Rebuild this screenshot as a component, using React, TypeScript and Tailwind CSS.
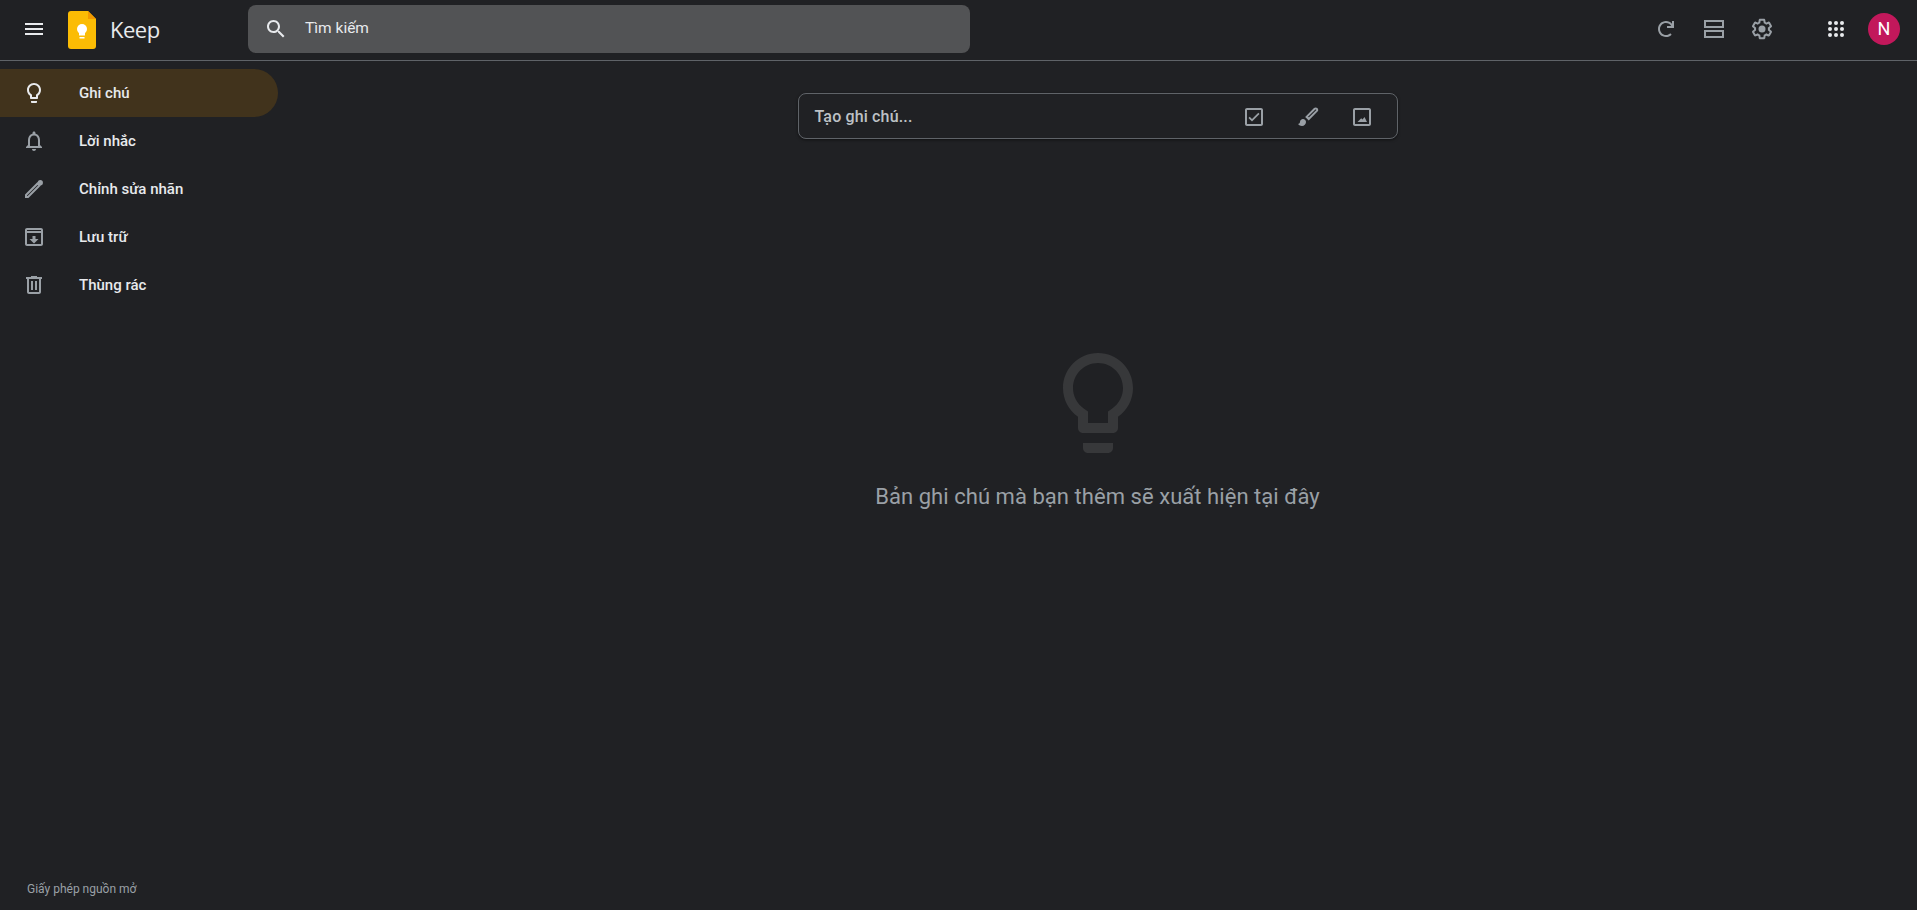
import type { ReactNode } from "react";

function Icon({ d, className, children }: { d?: string; className?: string; children?: ReactNode }) {
  return (
    <svg viewBox="0 0 24 24" fill="currentColor" className={className}>
      {d && <path d={d} />}
      {children}
    </svg>
  );
}

const paths = {
  menu: "M3 18h18v-2H3v2zm0-5h18v-2H3v2zm0-7v2h18V6H3z",
  search:
    "M15.5 14h-.79l-.28-.27C15.41 12.59 16 11.11 16 9.5 16 5.91 13.09 3 9.5 3S3 5.91 3 9.5 5.91 16 9.5 16c1.61 0 3.09-.59 4.23-1.57l.27.28v.79l5 4.99L20.49 19l-4.99-5zm-6 0C7.01 14 5 11.99 5 9.5S7.01 5 9.5 5 14 7.01 14 9.5 11.99 14 9.5 14z",
  bulb: "M9 21c0 .55.45 1 1 1h4c.55 0 1-.45 1-1v-1H9v1zm3-19C8.14 2 5 5.14 5 9c0 2.38 1.19 4.47 3 5.74V17c0 .55.45 1 1 1h6c.55 0 1-.45 1-1v-2.26c1.81-1.27 3-3.36 3-5.74 0-3.86-3.14-7-7-7zm2.85 11.1l-.85.6V16h-4v-2.3l-.85-.6C7.8 12.16 7 10.63 7 9c0-2.76 2.24-5 5-5s5 2.24 5 5c0 1.63-.8 3.16-2.15 4.1z",
  bell: "M12 22c1.1 0 2-.9 2-2h-4c0 1.1.89 2 2 2zm6-6v-5c0-3.07-1.64-5.64-4.5-6.32V4c0-.83-.67-1.5-1.5-1.5s-1.5.67-1.5 1.5v.68C7.63 5.36 6 7.92 6 11v5l-2 2v1h16v-1l-2-2zm-2 1H8v-6c0-2.48 1.51-4.5 4-4.5s4 2.02 4 4.5v6z",
  archive:
    "M19 3H5c-1.1 0-2 .9-2 2v14c0 1.1.9 2 2 2h14c1.1 0 2-.9 2-2V5c0-1.1-.9-2-2-2zm0 16H5V8h14v11zm0-13H5V5h14v1zm-7 12.5l4.5-4.5h-3v-3h-3v3h-3l4.5 4.5z",
  trash: "M15 4V3H9v1H4v2h1v13c0 1.1.9 2 2 2h10c1.1 0 2-.9 2-2V6h1V4h-5zm2 15H7V6h10v13zM9 8h2v9H9zm4 0h2v9h-2z",
  refresh:
    "M13 9v2h7V4h-2v2.74C16.53 5.07 14.4 4 12 4c-2.21 0-4.21.9-5.66 2.34S4 9.79 4 12c0 4.42 3.58 8 8 8 2.21 0 4.21-.9 5.66-2.34l-1.41-1.41C15.15 17.35 13.65 18 12 18c-3.31 0-6-2.69-6-6 0-1.65.67-3.15 1.76-4.24C8.85 6.67 10.35 6 12 6c2.22 0 4.15 1.21 5.19 3H13z",
  agenda: "M2 3h20v8H2V3zm2 2v4h16V5H4zM2 13h20v8H2v-8zm2 2v4h16v-4H4z",
  settings:
    "M13.85 22.25h-3.7c-.74 0-1.36-.54-1.45-1.27l-.27-1.89c-.27-.14-.53-.29-.79-.46l-1.8.72c-.7.26-1.47-.03-1.81-.65L2.2 15.53c-.35-.66-.2-1.44.36-1.88l1.53-1.19c-.01-.15-.02-.3-.02-.46 0-.15.01-.31.02-.46l-1.52-1.19c-.59-.45-.74-1.26-.37-1.88l1.85-3.19c.34-.62 1.11-.9 1.79-.63l1.81.73c.26-.17.52-.32.78-.46l.27-1.91c.09-.7.71-1.25 1.44-1.25h3.7c.74 0 1.36.54 1.45 1.27l.27 1.89c.27.14.53.29.79.46l1.8-.72c.71-.26 1.48.03 1.82.65l1.84 3.18c.36.66.2 1.44-.36 1.88l-1.52 1.19c.01.15.02.3.02.46s-.01.31-.02.46l1.52 1.19c.56.45.72 1.23.37 1.86l-1.86 3.22c-.34.62-1.11.9-1.8.63l-1.8-.72c-.26.17-.52.32-.78.46l-.27 1.91c-.1.68-.72 1.22-1.46 1.22zm-3.23-2h2.76l.37-2.55.53-.22c.44-.18.88-.44 1.34-.78l.45-.34 2.38.96 1.38-2.4-2.03-1.58.07-.56c.03-.26.06-.51.06-.78s-.03-.53-.06-.78l-.07-.56 2.03-1.58-1.39-2.4-2.39.96-.45-.35c-.42-.32-.87-.58-1.33-.77l-.52-.22-.37-2.55h-2.76l-.37 2.55-.53.21c-.44.19-.88.44-1.34.79l-.45.33-2.38-.95-1.39 2.39 2.03 1.58-.07.56a7 7 0 0 0-.06.79c0 .26.02.53.06.78l.07.56-2.03 1.58 1.38 2.4 2.39-.96.45.35c.43.33.86.58 1.33.77l.53.22.38 2.55z",
  checkbox:
    "M19 3H5c-1.1 0-2 .9-2 2v14c0 1.1.9 2 2 2h14c1.1 0 2-.9 2-2V5c0-1.1-.9-2-2-2zm0 16H5V5h14v14zM17.5 9l-1.2-1.2-6.3 6.3-2.3-2.3L6.5 13l3.5 3.5z",
  image:
    "M19 3H5c-1.1 0-2 .9-2 2v14c0 1.1.9 2 2 2h14c1.1 0 2-.9 2-2V5c0-1.1-.9-2-2-2zm0 16H5V5h14v14zM14.5 12l-2 2.4-1.3-1.2L7.5 17h9.5z",
};

const pencil = (
  <>
    <path d="M4 18L15.5 6.5l2 2L6 20H4z" fill="none" stroke="currentColor" strokeWidth="2" />
    <circle cx="18.3" cy="5.7" r="2.6" />
  </>
);

const navItems: { label: string; icon?: string; extra?: ReactNode; active?: boolean }[] = [
  { label: "Ghi chú", icon: paths.bulb, active: true },
  { label: "Lời nhắc", icon: paths.bell },
  { label: "Chỉnh sửa nhãn", extra: pencil },
  { label: "Lưu trữ", icon: paths.archive },
  { label: "Thùng rác", icon: paths.trash },
];

function KeepLogo() {
  return (
    <svg viewBox="0 0 28 38" className="h-[38px] w-[28px]">
      <path d="M3 0h17l8 8v27a3 3 0 0 1-3 3H3a3 3 0 0 1-3-3V3a3 3 0 0 1 3-3z" fill="#fbbc04" />
      <path d="M20 0l8 8h-8V0z" fill="#f29900" />
      <circle cx="14" cy="18" r="5" fill="#fff" />
      <rect x="11" y="22" width="6" height="2.5" fill="#fff" />
      <rect x="11.5" y="26" width="5" height="1.5" fill="#fff" />
    </svg>
  );
}

function BrushIcon({ className }: { className?: string }) {
  return (
    <svg viewBox="0 0 24 24" className={className} fill="none">
      <path
        d="M10.6 11.9l8.1-8.1a1.4 1.4 0 0 1 2 0l.1.1a1.4 1.4 0 0 1 0 2l-8.1 8.1z"
        stroke="currentColor"
        strokeWidth="2"
      />
      <path d="M7 14c-1.66 0-3 1.34-3 3 0 1.31-1.16 2-2 2 .92 1.22 2.49 2 4 2 2.21 0 4-1.79 4-4 0-1.66-1.34-3-3-3z" fill="currentColor" />
    </svg>
  );
}

function AppsIcon({ className }: { className?: string }) {
  const spots = [6, 12, 18];
  return (
    <svg viewBox="0 0 24 24" className={className} fill="currentColor">
      {spots.map((y) => spots.map((x) => <circle key={`${x}-${y}`} cx={x} cy={y} r="2" />))}
    </svg>
  );
}

export default function App() {
  return (
    <div className="flex h-[910px] flex-col overflow-hidden bg-[#202124] font-['Roboto',sans-serif] text-[#e8eaed]">
      {/* header */}
      <header className="flex h-[61px] shrink-0 items-center border-b border-[#5f6368] pb-[2px]">
        <Icon d={paths.menu} className="ml-[22px] h-6 w-6 text-[#e8eaed]" />
        <div className="ml-[22px] pt-[2px]">
          <KeepLogo />
        </div>
        <span className="ml-[14px] w-[128px] font-['Open_Sans',sans-serif] text-[22px] leading-none font-medium tracking-[-0.5px] text-[#e8eaed]">Keep</span>
        <div className="ml-[10px] flex h-12 w-[722px] items-center rounded-lg bg-[#525355]">
          <Icon d={paths.search} className="ml-4 h-6 w-6 text-[#e8eaed]" />
          <span className="ml-[17px] text-[15.5px] text-[#e8eaed]">Tìm kiếm</span>
        </div>
        <div className="ml-auto flex items-center">
          <Icon d={paths.refresh} className="h-6 w-6 text-[#9aa0a6]" />
          <Icon d={paths.agenda} className="ml-6 h-6 w-6 text-[#9aa0a6]" />
          <Icon d={paths.settings} className="ml-6 h-6 w-6 text-[#9aa0a6]">
            <circle cx="12" cy="12" r="3.5" />
          </Icon>
          <AppsIcon className="ml-[50px] h-6 w-6 text-[#e8eaed]" />
          <div className="mr-[17px] ml-5 flex h-8 w-8 items-center justify-center rounded-full bg-[#c2185b] text-lg text-white">N</div>
        </div>
      </header>

      <div className="flex min-h-0 flex-1">
        {/* sidebar */}
        <aside className="flex w-[278px] shrink-0 flex-col pt-2">
          {navItems.map((item) => (
            <div
              key={item.label}
              className={`flex h-12 w-[278px] items-center rounded-r-3xl pl-[22px] ${item.active ? "bg-[#41331c]" : ""}`}
            >
              <Icon d={item.icon} className={`h-6 w-6 ${item.active ? "text-[#e8eaed]" : "text-[#9aa0a6]"}`}>
                {item.extra}
              </Icon>
              <span className="ml-[33px] text-[15px] font-medium text-[#e8eaed]">{item.label}</span>
            </div>
          ))}
          <div className="mt-auto pb-[13px] pl-[27px] text-xs text-[#9aa0a6]">Giấy phép nguồn mở</div>
        </aside>

        {/* main */}
        <main className="flex flex-1 flex-col items-center pt-8">
          <div className="flex h-[46px] w-[600px] items-center rounded-lg border border-[#5f6368] pt-[2px] pr-[23px] pl-4 shadow-[0_1px_3px_rgba(0,0,0,0.5)]">
            <span className="flex-1 text-base font-medium tracking-[0.15px] text-[#bdc1c6]">Tạo ghi chú...</span>
            <Icon d={paths.checkbox} className="h-6 w-6 text-[#9aa0a6]" />
            <BrushIcon className="ml-[30px] h-6 w-6 text-[#9aa0a6]" />
            <Icon d={paths.image} className="ml-[30px] h-6 w-6 text-[#9aa0a6]" />
          </div>

          <Icon d={paths.bulb} className="mt-[204px] h-[120px] w-[120px] text-[#37383a]" />
          <p className="mt-5 text-[22px] leading-7 tracking-[0.05px] text-[#9aa0a6]">Bản ghi chú mà bạn thêm sẽ xuất hiện tại đây</p>
        </main>
      </div>
    </div>
  );
}
